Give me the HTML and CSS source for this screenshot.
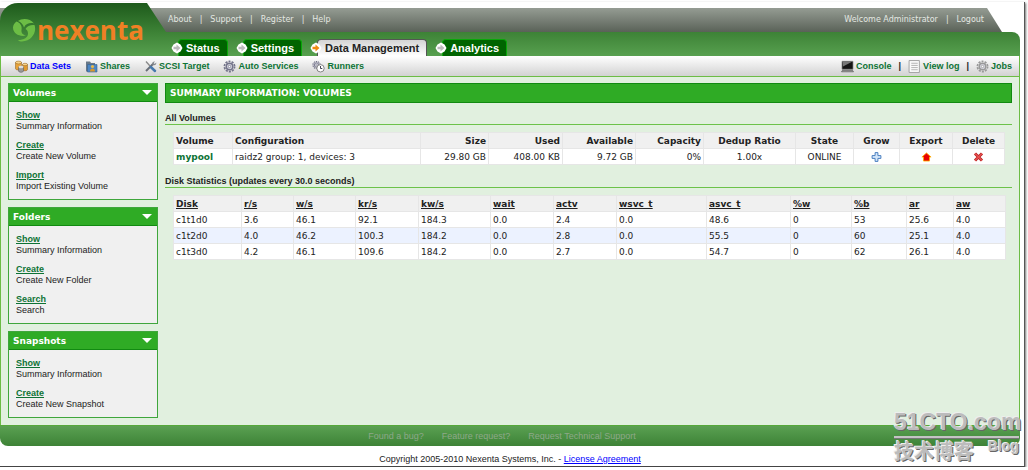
FILE: index.html
```html
<!DOCTYPE html>
<html lang="en">
<head>
<meta charset="utf-8">
<title>Nexenta - Data Management</title>
<link rel="stylesheet" href="styles.css">
</head>
<body>
<svg class="defs" aria-hidden="true">
  <symbol id="dot" viewBox="0 0 12 12"><path d="M6 .5 9.500 2.500 11.500 6 9.500 9.500 6 11.500 2.500 9.500.5 6 2.500 2.500Z" fill="#fff"/><path d="M2.500 4.800h3V2.600L9.500 6 5.500 9.400V7.200h-3Z" fill="currentColor"/></symbol>
  <symbol id="gear" viewBox="0 0 12 12"><circle cx="6" cy="6" r="4.700" fill="none" stroke="currentColor" stroke-width="1.600" stroke-dasharray="1.900 1.050"/><circle cx="6" cy="6" r="3" fill="#d4d4de" stroke="currentColor" stroke-width="1.300"/><circle cx="6" cy="6" r="1.100" fill="#fff" stroke="currentColor" stroke-width=".7"/></symbol>
</svg>
<div class="window">
  <header class="header">
    <a class="logo" href="#" aria-label="nexenta">
      <svg class="logo-mark" viewBox="0 0 24 24"><g fill="#6cbd45"><path d="M6 3C10 0 18 0 22 5.500 19 4.500 14 5 12 9.500 11 6.500 9 4 6 3Z"/><path d="M4.500 3.500C8 4.500 10.500 8 9.500 12c-.5 3 1.500 5 4.500 5.500C8 19 1 16 1 9.500 1 7 2.500 5 4.500 3.500Z"/><path d="M22.500 7C25 14 20 23 10 23.500c-2 0-3-.5-4-1.500 6 0 10-2.500 10-6.500 0-2.500-1-3.500-2.500-4.500C15 8 19 6.500 22.500 7Z"/></g></svg>
      <span>nexenta</span>
    </a>
    <div class="topbar">
      <nav class="toplinks"><a href="#">About</a><i>|</i><a href="#">Support</a><i>|</i><a href="#">Register</a><i>|</i><a href="#">Help</a></nav>
      <div class="toplinks"><span>Welcome Administrator</span><i>|</i><a href="#">Logout</a></div>
    </div>
    <nav class="tabs">
      <a class="tab" href="#"><svg><use href="#dot"/></svg>Status</a>
      <a class="tab" href="#"><svg><use href="#dot"/></svg>Settings</a>
      <a class="tab active" href="#"><svg><use href="#dot"/></svg>Data Management</a>
      <a class="tab" href="#"><svg><use href="#dot"/></svg>Analytics</a>
    </nav>
  </header>

  <nav class="toolbar">
    <a class="current" href="#"><svg viewBox="0 0 13 12"><g stroke="#8a5a18" stroke-width=".5"><path d="M.5 2v6c0 2 6 2 6 0V2Z" fill="#e8a33a"/><ellipse cx="3.500" cy="2" rx="3" ry="1.400" fill="#f8d48c"/><path d="M7.500 4v5c0 1.800 5 1.800 5 0V4Z" fill="#e09a30"/><ellipse cx="10" cy="4" rx="2.500" ry="1.200" fill="#f8d48c"/></g><path d="M3.500 6.500v4c0 1.800 5 1.800 5 0v-4Z" fill="#999" stroke="#555" stroke-width=".5"/><ellipse cx="6" cy="6.500" rx="2.500" ry="1.200" fill="#ddd"/></svg>Data Sets</a>
    <a href="#"><svg viewBox="0 0 13 12"><path d="M1 1h4l1 1.500h4V11H1Z" fill="#687888"/><path d="M2.500 4H12v7.500H2.500Z" fill="#4c86c4" stroke="#35618f" stroke-width=".6"/><circle cx="7.500" cy="6" r="1.600" fill="#e9b84a"/><path d="M5 11c0-4 5-4 5 0Z" fill="#d9962a"/></svg>Shares</a>
    <a href="#"><svg viewBox="0 0 13 12"><path d="m2 10.500 7-7" stroke="#6a6f78" stroke-width="2"/><path d="M8 3.500C8 1.500 9.500.7 11 1L9.700 2.400l1 1L12.200 2c.4 2-1 3.200-3 2.700Z" fill="#85898f"/><path d="m2 1 4 4.500" stroke="#888" stroke-width="1.300"/><path d="m6.800 6.500 4.200 4" stroke="#4779ad" stroke-width="2.500" stroke-linecap="round"/></svg>SCSI Target</a>
    <a class="gear" href="#"><svg><use href="#gear"/></svg>Auto Services</a>
    <a class="gear" href="#"><svg viewBox="0 0 13 12"><use href="#gear" width="9" height="9"/><circle cx="8.500" cy="7.800" r="3.700" fill="#fff" stroke="#777" stroke-width=".9"/><path d="M8.500 5.500v2.500h1.800" fill="none" stroke="#445"/></svg>Runners</a>
    <span class="spacer"></span>
    <a href="#"><svg viewBox="0 0 13 12"><path d="M1 .8h11v8H1Z" fill="#151515" stroke="#888" stroke-width=".7"/><path d="M1.500 1.200h9.500L2 6Z" fill="#777"/><path d="M1.500 9.800h10l1 1.500H.5Z" fill="#aaa" stroke="#444" stroke-width=".6"/></svg>Console</a>
    <i>|</i>
    <a href="#"><svg viewBox="0 0 12 12"><path d="M1 .5h9.500v11H1Z" fill="#fafafa" stroke="#999" stroke-width=".8"/><path d="M3 3h6M3 5h6M3 7h6M3 9h6" stroke="#aaa" stroke-width=".8"/></svg>View log</a>
    <i>|</i>
    <a class="grey-gear" href="#"><svg><use href="#gear"/></svg>Jobs</a>
  </nav>

  <div class="body">
    <aside class="side">
      <section class="panel">
        <h2>Volumes<span class="arrow"></span></h2>
        <dl><dt><a href="#">Show</a></dt><dd>Summary Information</dd><dt><a href="#">Create</a></dt><dd>Create New Volume</dd><dt><a href="#">Import</a></dt><dd>Import Existing Volume</dd></dl>
      </section>
      <section class="panel">
        <h2>Folders<span class="arrow"></span></h2>
        <dl><dt><a href="#">Show</a></dt><dd>Summary Information</dd><dt><a href="#">Create</a></dt><dd>Create New Folder</dd><dt><a href="#">Search</a></dt><dd>Search</dd></dl>
      </section>
      <section class="panel">
        <h2>Snapshots<span class="arrow"></span></h2>
        <dl><dt><a href="#">Show</a></dt><dd>Summary Information</dd><dt><a href="#">Create</a></dt><dd>Create New Snapshot</dd></dl>
      </section>
    </aside>
    <main class="main">
      <h1>SUMMARY INFORMATION: VOLUMES</h1>
      <h3>All Volumes</h3>
      <table class="grid volumes">
        <colgroup><col class="w59"><col class="w188"><col class="w68"><col class="w74"><col class="w73"><col class="w68"><col class="w92"><col class="w58"><col class="w46"><col class="w53"><col class="w52"></colgroup>
        <thead><tr><th>Volume</th><th>Configuration</th><th class="num">Size</th><th class="num">Used</th><th class="num">Available</th><th class="num">Capacity</th><th class="mid">Dedup Ratio</th><th class="mid">State</th><th class="mid">Grow</th><th class="mid">Export</th><th class="mid">Delete</th></tr></thead>
        <tbody><tr><td><a href="#">mypool</a></td><td>raidz2 group: 1, devices: 3</td><td class="num">29.80 GB</td><td class="num">408.00 KB</td><td class="num">9.72 GB</td><td class="num">0%</td><td class="mid">1.00x</td><td class="mid">ONLINE</td>
        <td class="mid"><button aria-label="Grow"><svg viewBox="0 0 10 10"><path d="M3.600.6h2.800v3h3v2.800h-3v3H3.600v-3h-3V3.600h3Z" fill="#d3e6fa" stroke="#4a7fc0"/></svg></button></td>
        <td class="mid"><button aria-label="Export"><svg viewBox="0 0 12 10"><path d="M6 .6 11 5H9.300v4.400H2.700V5H1Z" fill="#e80000" stroke="#ffb400" stroke-width=".9"/></svg></button></td>
        <td class="mid"><button aria-label="Delete"><svg viewBox="0 0 10 10"><path d="m1.500 1.500 7 7m0-7-7 7" stroke="#b51f1f" stroke-width="3"/><path d="m1.500 1.500 7 7m0-7-7 7" stroke="#e65050" stroke-width="1.500"/></svg></button></td></tr></tbody>
      </table>
      <h3>Disk Statistics (updates every 30.0 seconds)</h3>
      <table class="grid disks">
        <colgroup><col class="w68"><col class="w52"><col class="w62"><col class="w63"><col class="w72"><col class="w63"><col class="w63"><col class="w90"><col class="w84"><col class="w61"><col class="w55"><col class="w47"><col class="w52"></colgroup>
        <thead><tr><th>Disk</th><th>r/s</th><th>w/s</th><th>kr/s</th><th>kw/s</th><th>wait</th><th>actv</th><th>wsvc_t</th><th>asvc_t</th><th>%w</th><th>%b</th><th>ar</th><th>aw</th></tr></thead>
        <tbody>
          <tr><td>c1t1d0</td><td>3.6</td><td>46.1</td><td>92.1</td><td>184.3</td><td>0.0</td><td>2.4</td><td>0.0</td><td>48.6</td><td>0</td><td>53</td><td>25.6</td><td>4.0</td></tr>
          <tr><td>c1t2d0</td><td>4.0</td><td>46.2</td><td>100.3</td><td>184.2</td><td>0.0</td><td>2.8</td><td>0.0</td><td>55.5</td><td>0</td><td>60</td><td>25.1</td><td>4.0</td></tr>
          <tr><td>c1t3d0</td><td>4.2</td><td>46.1</td><td>109.6</td><td>184.2</td><td>0.0</td><td>2.7</td><td>0.0</td><td>54.7</td><td>0</td><td>62</td><td>26.1</td><td>4.0</td></tr>
        </tbody>
      </table>
    </main>
  </div>

  <footer class="footer"><a href="#">Found a bug?</a><a href="#">Feature request?</a><a href="#">Request Technical Support</a></footer>
  <p class="copyright">Copyright 2005-2010 Nexenta Systems, Inc. - <a href="#">License Agreement</a></p>
  <div class="watermark">
    <div class="wm-top">51CTO.com</div>
    <div class="wm-bottom"><span class="wm-cn" lang="zh">技术博客</span><span class="wm-blog">Blog</span></div>
  </div>
</div>
</body>
</html>
```
FILE: styles.css
```css
* { box-sizing: border-box; }
body {
  margin: 0;
  background: #fff;
  color: #222;
  font: 9px/12px "Liberation Sans", Arial, sans-serif;
}
a { color: #0d7335; }
i { font-style: normal; }
h1, h2, h3, p, dl, dd { margin: 0; }
.defs { position: absolute; width: 0; height: 0; }

.window {
  position: relative;
  margin: 2px 3px 0 0;
  padding-right: 4px;
  border-right: 1px solid #555;
  border-bottom: 1px solid #444;
  box-shadow: 1px 1px 2px #777;
}

/* header */
.header {
  display: grid;
  grid-template-columns: 166px 1fr;
  grid-template-rows: 6px 24px 24px;
}
.logo {
  grid-area: 1 / 1 / 4 / 2;
  z-index: 1;
  display: flex;
  align-items: center;
  gap: 1px;
  padding: 0 0 0 12px;
  margin-top: 1px;
  background: linear-gradient(#1d5a1b, #3d8236 55%, #57a04f);
  border-radius: 18px 0 0 0;
  clip-path: polygon(0 0, 147px 0, 166px 29px, 166px 100%, 0 100%);
  color: #f08024;
  font: bold 26px/32px "Open Sans", "Noto Sans", sans-serif;
  text-decoration: none;
}
.logo-mark { width: 24px; height: 24px; }
.topbar {
  grid-area: 2 / 1 / 3 / 3;
  display: flex;
  justify-content: space-between;
  align-items: center;
  margin-right: 18px;
  padding: 0 18px 0 168px;
  background: linear-gradient(#959c93, #5a6258);
  clip-path: polygon(0 0, calc(100% - 15px) 0, 100% 100%, 0 100%);
}
.toplinks {
  display: flex;
  gap: 8px;
  color: #e4e8e2;
  font: 8px/12px "DejaVu Sans", Verdana, sans-serif;
}
.toplinks a { color: inherit; text-decoration: none; }
.tabs {
  grid-area: 3 / 2 / 4 / 3;
  display: flex;
  align-items: flex-end;
  gap: 15px;
  padding-left: 12px;
  background: linear-gradient(#3d8236, #57a04f);
  border-top-right-radius: 8px;
}
.tab {
  position: relative;
  height: 17px;
  padding: 0 7px;
  border: 1px solid #08a808;
  border-bottom: 0;
  border-radius: 4px 4px 0 0;
  background: #006400;
  color: #fff;
  font: bold 11px/17px "Liberation Sans", Arial, sans-serif;
  text-decoration: none;
}
.tab svg { position: absolute; left: -8px; top: 2px; width: 12px; height: 12px; color: #bbb; }
.tab.active { background: linear-gradient(#d4d4d4, #fff); border-color: #555; color: #222; }
.tab.active svg { color: #f08a10; }

/* toolbar */
.toolbar {
  display: flex;
  align-items: center;
  gap: 14px;
  height: 21px;
  padding: 0 7px 0 14px;
  border: solid #6cbc45;
  border-width: 0 1px 1px;
  background: linear-gradient(#fff, #d2d2d2);
  font-weight: bold;
}
.toolbar a { display: flex; align-items: center; gap: 2px; text-decoration: none; }
.toolbar .current { color: #00f; }
.toolbar svg { width: 13px; height: 13px; }
.toolbar i { margin: 0 -7px; }
.gear svg { color: #74748a; }
.grey-gear svg { color: #999; }
.spacer { flex: 1; }

/* content */
.body {
  display: flex;
  gap: 7px;
  padding: 6px 7px 7px;
  border: solid #6cbc45;
  border-width: 0 1px;
  background: #e1f0df;
}
.side { flex: 0 0 150px; display: flex; flex-direction: column; gap: 7px; }
.panel { border: 1px solid #3fa63c; background: #f0f0f0; }
.panel h2 {
  display: flex;
  align-items: center;
  justify-content: space-between;
  height: 18px;
  padding: 0 5px 0 4px;
  border-bottom: 1px solid #118a11;
  background: #2fab25;
  color: #fff;
  font: bold 9px/16px "DejaVu Sans", Verdana, sans-serif;
}
.arrow { border: solid transparent; border-width: 5px 5px 0; border-top-color: #fff; }
.panel dl { padding: 8px 7px 7px; line-height: 11px; }
.panel dt { font-weight: bold; }
.panel dd + dt { margin-top: 8px; }

.main { flex: 1; min-width: 0; }
.main h1 {
  height: 20px;
  padding: 0 4px;
  border: 1px solid #118a11;
  background: #2fab25;
  color: #fff;
  font: bold 9px/18px "DejaVu Sans", Verdana, sans-serif;
}
.main h3 {
  margin-top: 9px;
  border-bottom: 1px solid #6cc24a;
  font-size: 9px;
  line-height: 12px;
}
.grid {
  width: calc(100% - 16px);
  margin: 7px 8px 0;
  table-layout: fixed;
  border-collapse: collapse;
  background: #fff;
  font: 9px/12px "DejaVu Sans", Verdana, sans-serif;
}
.grid th, .grid td { height: 16px; padding: 0 2px; border: 1px solid #e6e6e6; text-align: left; white-space: nowrap; }
.grid th { background: #f0f0f0; }
.grid .num { text-align: right; }
.grid .mid { text-align: center; }
.grid a { font-weight: bold; text-decoration: none; }
.grid.volumes { margin-bottom: 10px; }
.disks th { text-decoration: underline; }
.disks tbody tr:nth-child(2) { background: #ecf2ff; }
.grid button { display: block; margin: 0 auto; padding: 0; border: 0; background: none; }
.grid button svg { display: block; width: 11px; height: 10px; }
.w46 { width: 46px; } .w47 { width: 47px; } .w52 { width: 52px; } .w53 { width: 53px; }
.w55 { width: 55px; } .w58 { width: 58px; } .w59 { width: 59px; } .w61 { width: 61px; }
.w62 { width: 62px; } .w63 { width: 63px; } .w68 { width: 68px; } .w72 { width: 72px; }
.w73 { width: 73px; } .w74 { width: 74px; } .w84 { width: 84px; } .w90 { width: 90px; }
.w92 { width: 92px; } .w188 { width: 188px; }

/* footer */
.footer {
  display: flex;
  justify-content: center;
  gap: 18px;
  padding: 4px 16px 4px 0;
  border-top: 1px solid #55a83a;
  border-radius: 0 0 8px 8px;
  background: linear-gradient(#5aa052, #3d8236);
}
.footer a { color: #8da889; text-decoration: none; }
.copyright { padding: 7px 0 1px; text-align: center; }
.copyright a { color: #00f; }

/* watermark */
.watermark {
  position: absolute;
  right: 5px;
  bottom: 2px;
  width: 125px;
  color: #bcbcbc;
  text-shadow: -1px -1px #eee, 1px 1px #666;
}
.wm-top { font: bold 23px/28px "Liberation Sans", Arial, sans-serif; border-bottom: 2px solid #c4c4c4; box-shadow: 0 1px #777; white-space: nowrap; }
.wm-bottom { display: flex; justify-content: space-between; align-items: flex-start; }
.wm-cn { font: bold 20px/26px "Noto Sans CJK SC", sans-serif; }
.wm-blog { font: bold 14px/16px "Liberation Sans", sans-serif; }
```
